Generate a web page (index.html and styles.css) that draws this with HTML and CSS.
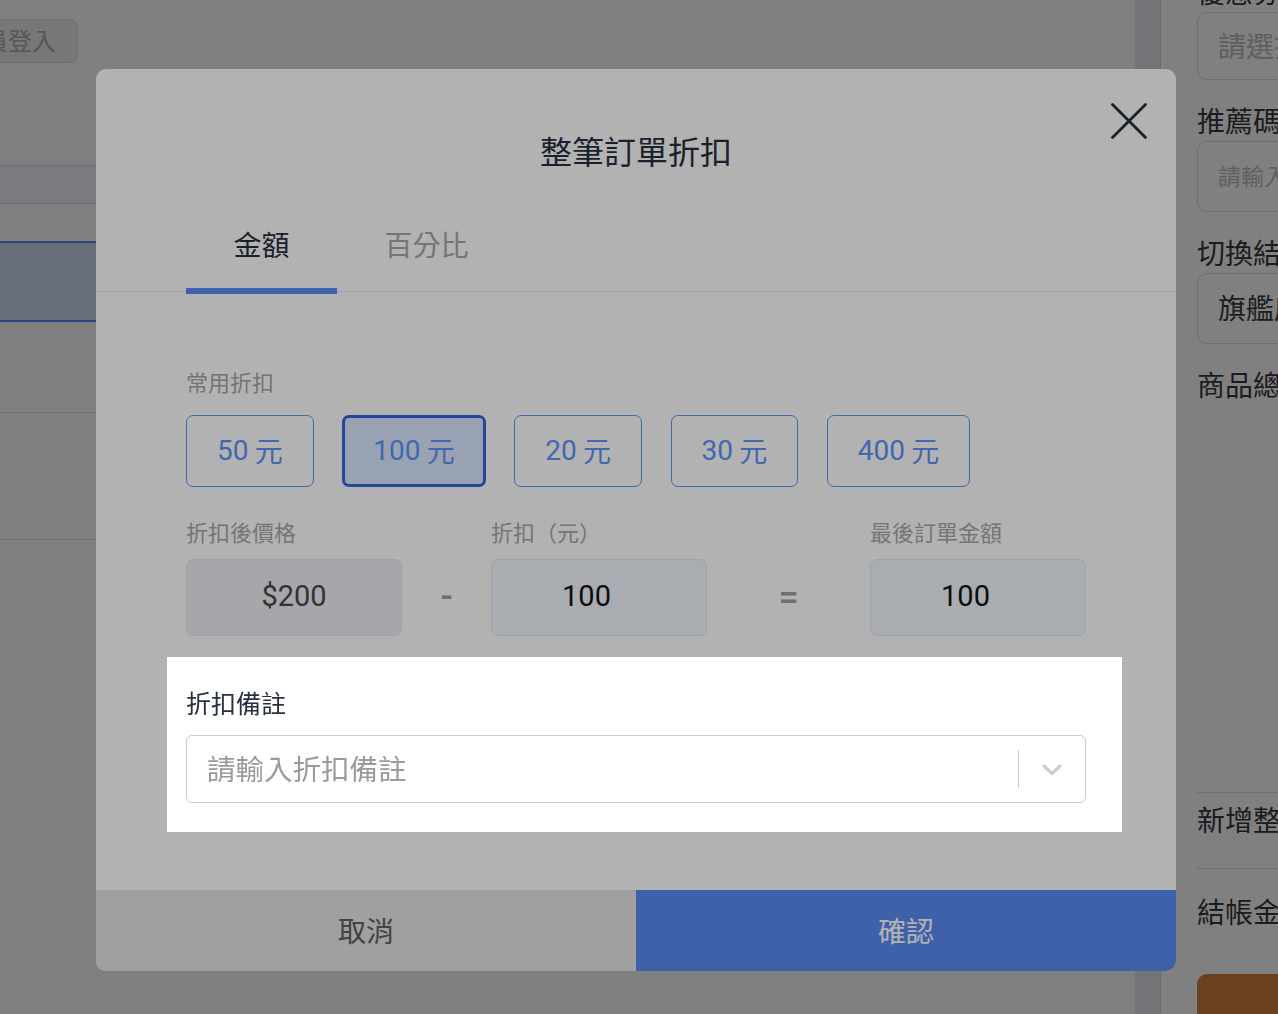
FILE: index.html
```html
<!DOCTYPE html>
<html lang="zh-Hant">
<head>
<meta charset="utf-8">
<title>整筆訂單折扣</title>
<link rel="stylesheet" href="styles.css">
</head>
<body>
<div class="page">
  <main class="main">
    <header class="topbar">
      <button class="login-btn">會員登入</button>
    </header>
    <div class="table">
      <div class="row row-head"></div>
      <div class="row row-a"></div>
      <div class="row row-selected"></div>
      <div class="row row-b"></div>
      <div class="row row-c"></div>
    </div>
  </main>
  <div class="scroll-strip"></div>
  <aside class="side">
    <div class="field field-first">
      <div class="field-label">優惠券</div>
      <div class="control control-short placeholder">請選擇優惠券</div>
    </div>
    <div class="field">
      <div class="field-label">推薦碼</div>
      <div class="control placeholder small">請輸入推薦碼</div>
    </div>
    <div class="field">
      <div class="field-label">切換結帳門市</div>
      <div class="control">旗艦店</div>
    </div>
    <div class="field-label">商品總計</div>
    <div class="summary">
      <div class="sum-row">新增整筆訂單折扣</div>
      <div class="sum-row sum-row-total">結帳金額</div>
      <button class="checkout-btn">前往結帳</button>
    </div>
  </aside>
</div>

<div class="mask"></div>

<div class="modal" role="dialog">
  <button class="close-btn" aria-label="關閉">
    <svg width="36" height="36" viewBox="0 0 36 36"><path d="M1.5 1.5 L34.5 34.5 M34.5 1.5 L1.5 34.5" stroke="#272d38" stroke-width="2.8" stroke-linecap="round" fill="none"/></svg>
  </button>
  <h2 class="modal-title">整筆訂單折扣</h2>
  <div class="tabs">
    <div class="tab active">金額</div>
    <div class="tab">百分比</div>
  </div>
  <div class="modal-body">
    <div class="section-label">常用折扣</div>
    <div class="chips">
      <button class="chip"><span class="num">50</span> 元</button>
      <button class="chip selected"><span class="num">100</span> 元</button>
      <button class="chip"><span class="num">20</span> 元</button>
      <button class="chip"><span class="num">30</span> 元</button>
      <button class="chip"><span class="num">400</span> 元</button>
    </div>
    <div class="calc">
      <div class="calc-label">折扣後價格</div>
      <div></div>
      <div class="calc-label">折扣（元）</div>
      <div></div>
      <div class="calc-label">最後訂單金額</div>
      <div class="calc-box muted">$200</div>
      <div class="op">-</div>
      <div class="calc-box">100</div>
      <div class="op">=</div>
      <div class="calc-box">100</div>
    </div>
    <div class="notes">
      <div class="notes-label">折扣備註</div>
      <div class="select">
        <span class="select-placeholder">請輸入折扣備註</span>
        <span class="select-sep"></span>
        <span class="select-arrow">
          <svg width="22" height="14" viewBox="0 0 22 14"><path d="M3 3 L11 10.5 L19 3" stroke="#cccccc" stroke-width="3.4" stroke-linecap="round" stroke-linejoin="round" fill="none"/></svg>
        </span>
      </div>
    </div>
  </div>
  <div class="modal-footer">
    <button class="btn-cancel">取消</button>
    <button class="btn-confirm">確認</button>
  </div>
</div>
</body>
</html>
```

FILE: styles.css
```css
* { box-sizing: border-box; }

html, body {
  margin: 0;
  padding: 0;
  overflow: hidden;
}

body {
  width: 1278px;
  height: 1014px;
  background: #ffffff;
  color: #3a3a3f;
  font-family: "Noto Sans CJK TC", "Noto Sans", sans-serif;
}

button {
  font-family: inherit;
  border: none;
  background: none;
  padding: 0;
  margin: 0;
  cursor: pointer;
}

/* ---------- background page ---------- */
.page {
  display: flex;
  height: 1014px;
}

.main {
  flex: none;
  width: 1135px;
}

.topbar {
  height: 166px;
  padding-top: 19px;
  border-bottom: 1px solid #dadcea;
}

.login-btn {
  margin-left: -61px;
  height: 44px;
  padding: 0 21px 2px 20px;
  border: 1px solid #dedede;
  border-radius: 8px;
  background: #eeeeee;
  color: #acacac;
  font-size: 24px;
  line-height: 40px;
}

.row { border-bottom: 1px solid #dadcea; }
.row-head { height: 38px; background: #f4f6fd; }
.row-a { height: 37px; border-bottom: none; }
.row-selected {
  height: 81px;
  background: #cdd8f2;
  border-top: 2px solid #5b8bf4;
  border-bottom: 2px solid #5b8bf4;
}
.row-b { height: 91px; }
.row-c { height: 127px; }

.scroll-strip {
  flex: none;
  width: 26px;
  background: #e6e8ef;
  border-right: 1px solid #d4d6de;
}

.side {
  flex: none;
  width: 380px;
  padding-left: 36px;
}

.field { margin-bottom: 22px; }
.field-first { margin-top: -27px; }

.field-label {
  font-size: 28px;
  line-height: 36px;
  color: #3a3a3f;
  white-space: nowrap;
}

.control {
  margin-top: 3px;
  height: 71px;
  padding: 0 0 3px 20px;
  border: 1px solid #d5dbef;
  border-radius: 10px;
  display: flex;
  align-items: center;
  font-size: 28px;
  color: #3c3c3c;
  white-space: nowrap;
}
.control-short { height: 68px; }
.placeholder { color: #bdbdbd; }
.small { font-size: 23px; }

.summary { margin-top: 390px; }

.sum-row {
  border-top: 1px solid #dadcea;
  padding: 8px 0 31px;
  font-size: 28px;
  line-height: 36px;
  color: #3a3a3f;
  white-space: nowrap;
}
.sum-row-total {
  padding: 24px 0 1px;
}

.checkout-btn {
  display: block;
  width: 100%;
  margin-top: 44px;
  height: 110px;
  border-radius: 10px;
  background: #d1833e;
  color: #ffffff;
  font-size: 28px;
}

/* ---------- modal ---------- */
.mask {
  position: fixed;
  inset: 0;
  background: rgba(0, 0, 0, 0.28);
  z-index: 10;
}

.modal {
  position: fixed;
  left: 96px;
  top: 69px;
  width: 1080px;
  padding-top: 59px;
  background: #ffffff;
  border-radius: 10px;
  z-index: 20;
}

.close-btn {
  position: absolute;
  top: 34px;
  right: 29px;
  width: 36px;
  height: 36px;
}
.close-btn svg { display: block; }

.modal-title {
  margin: 0;
  text-align: center;
  font-size: 32px;
  line-height: 44px;
  font-weight: 400;
  color: #283040;
}

.tabs {
  display: flex;
  margin-top: 52px;
  padding-left: 90px;
  border-bottom: 1px solid #e6e9f4;
}

.tab {
  padding: 0 47.5px 24px;
  margin-bottom: -3px;
  font-size: 28px;
  line-height: 40px;
  color: #a8a8a8;
  border-bottom: 6px solid transparent;
}
.tab.active {
  color: #283040;
  border-bottom-color: #5b8bf4;
}

.modal-body {
  padding: 73px 90px 58px;
}

.section-label,
.calc-label {
  font-size: 22px;
  line-height: 32px;
  color: #a8a8a8;
  white-space: nowrap;
}

.chips {
  display: flex;
  gap: 28.5px;
  margin-top: 18px;
}

.chip {
  display: flex;
  align-items: center;
  height: 72px;
  padding: 0 30px 2px;
  border: 1px solid #6193fc;
  border-radius: 7px;
  color: #6193fc;
  font-size: 28px;
  white-space: pre;
}
.chip .num { font-family: Roboto, "Noto Sans", sans-serif; }
.chip.selected {
  border: 3px solid #3564dc;
  background: #dce8ff;
  padding: 0 28px 2px;
}

.calc {
  display: grid;
  grid-template-columns: 216px 89px 216px 163px 216px;
  row-gap: 12px;
  margin-top: 28px;
}

.calc-box {
  height: 77px;
  padding: 0 25px 3px 0;
  display: flex;
  align-items: center;
  justify-content: center;
  border: 1px solid #e2e7f6;
  border-radius: 7px;
  background: #f3f6fd;
  font-family: Roboto, "Noto Sans", sans-serif;
  font-size: 29px;
  color: #141414;
}
.calc-box.muted {
  padding-right: 0;
  background: #eef0f4;
  color: #4a4a4a;
}

.op {
  display: flex;
  align-items: center;
  justify-content: center;
  padding-bottom: 2px;
  font-family: Roboto, "Noto Sans", sans-serif;
  font-size: 36px;
  font-weight: 500;
  color: #a0a0a0;
}

/* spotlighted section of the product tour */
.notes {
  position: relative;
  z-index: 10;
  margin: 21px -36px 0 -19px;
  padding: 28px 36px 29px 19px;
  background: #ffffff;
  box-shadow: 0 0 0 4000px rgba(0, 0, 0, 0.3);
}

.notes-label {
  font-size: 25px;
  line-height: 34px;
  color: #283040;
}

.select {
  margin-top: 16px;
  height: 68px;
  display: flex;
  align-items: center;
  border: 1px solid #cccccc;
  border-radius: 6px;
}

.select-placeholder {
  flex: 1;
  padding: 0 0 3px 20px;
  font-size: 28.5px;
  color: #9a9a9a;
}

.select-sep {
  width: 1px;
  height: 38px;
  background: #cccccc;
}

.select-arrow {
  width: 66px;
  display: flex;
  justify-content: center;
  padding-top: 2px;
}
.select-arrow svg { display: block; }

.modal-footer {
  display: flex;
  height: 81px;
}

.btn-cancel,
.btn-confirm {
  flex: 1;
  padding-bottom: 2px;
  font-size: 28px;
}
.btn-cancel {
  background: #e4e5e4;
  color: #616161;
  border-bottom-left-radius: 10px;
}
.btn-confirm {
  background: #5b8bf4;
  color: #ffffff;
  border-bottom-right-radius: 10px;
}
```
